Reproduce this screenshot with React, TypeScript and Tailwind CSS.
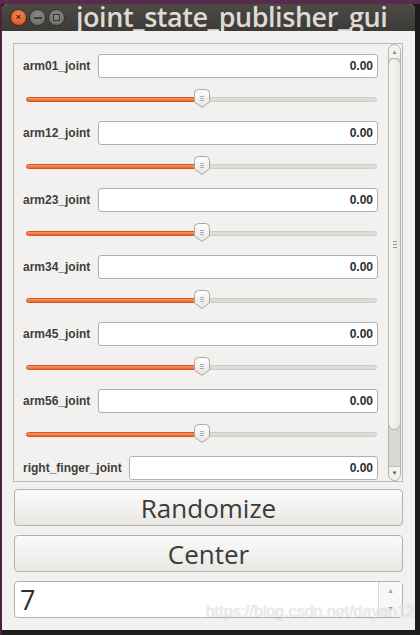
import React from "react";

const joints = [
  "arm01_joint",
  "arm12_joint",
  "arm23_joint",
  "arm34_joint",
  "arm45_joint",
  "arm56_joint",
  "right_finger_joint",
];

const SliderHandle = () => (
  <svg width="16" height="19" viewBox="0 0 16 19" className="block">
    <defs>
      <linearGradient id="hg" x1="0" y1="0" x2="0" y2="1">
        <stop offset="0" stopColor="#ffffff" />
        <stop offset="1" stopColor="#e6e4e0" />
      </linearGradient>
    </defs>
    <path
      d="M4.5 0.5 H11.5 A4 4 0 0 1 15.5 4.5 V13 L8 18.5 L0.5 13 V4.5 A4 4 0 0 1 4.5 0.5 Z"
      fill="url(#hg)"
      stroke="#a9a6a0"
    />
    <path d="M6 7.5 H10 M6 9.5 H10 M6 11.5 H10" stroke="#a09d97" strokeWidth="0.8" />
  </svg>
);

const JointRow = ({ name }: { name: string }) => {
  const wide = name.length > 12;
  return (
    <div className="flex flex-col">
      <div className="flex items-center h-[24px]">
        <span className={`${wide ? "w-[106px]" : "w-[75px]"} text-[12px] font-bold text-[#3f3f3f] whitespace-nowrap`}>
          {name}
        </span>
        <div className="flex-1 h-[24px] bg-white border border-[#b3b0ab] rounded-[3px] flex items-center justify-end pr-[4px] text-[12px] font-bold text-[#2e2e2e]">
          0.00
        </div>
      </div>
      <div className="h-[43px] pt-[12px] pl-[3px] pr-[1px]">
        <div className="relative h-[19px] flex items-start pt-[7px]">
          <div className="flex w-full h-[5px]">
            <div className="w-1/2 h-full rounded-l-full bg-[linear-gradient(#f79a6c,#ec6430)] border border-[#cf5523]" />
            <div className="w-1/2 h-full rounded-r-full bg-[#dedcd8] border border-[#d0cdc8]" />
          </div>
          <div className="absolute left-1/2 -translate-x-1/2 top-[-1px]">
            <SliderHandle />
          </div>
        </div>
      </div>
    </div>
  );
};

const App = () => {
  return (
    <div
      className="w-[420px] h-[635px] overflow-hidden bg-[#1e1e1e] flex flex-col"
      style={{ fontFamily: '"Liberation Sans", Arial, sans-serif' }}
    >
      <div className="h-[4px] bg-[#5a2a4c] shrink-0" />
      <div className="flex flex-1 min-h-0">
        <div className="w-[2px] bg-[#4a2240] shrink-0" />
        <div className="relative w-[413px] h-[626px] flex flex-col bg-[#f2f1f0] rounded-t-[6px] overflow-hidden">
          {/* title bar */}
          <div className="h-[27px] shrink-0 flex items-center bg-[linear-gradient(#4b4a45,#3c3b37)] overflow-hidden">
            <div className="flex items-center gap-[2px] pl-[8px]">
              <div className="w-[17px] h-[17px] rounded-full bg-[radial-gradient(circle_at_50%_35%,#f58a5c,#df4a16)] border border-[#3a2a22] flex items-center justify-center text-[#3a2014] text-[9px] font-bold leading-none">
                ×
              </div>
              <div className="w-[17px] h-[17px] rounded-full bg-[radial-gradient(circle_at_50%_35%,#8a8882,#6a6863)] border border-[#34332f] flex items-center justify-center">
                <div className="w-[8px] h-[2px] bg-[#3a3935]" />
              </div>
              <div className="w-[17px] h-[17px] rounded-full bg-[radial-gradient(circle_at_50%_35%,#8a8882,#6a6863)] border border-[#34332f] flex items-center justify-center">
                <div className="w-[7px] h-[7px] border border-[#3a3935]" />
              </div>
            </div>
            <span
              className="ml-[11px] text-[27px] font-semibold text-[#dfdbd2] whitespace-nowrap leading-none mt-[-2px] tracking-[-0.45px]"
              style={{ fontFamily: '"Open Sans", sans-serif' }}
            >
              joint_state_publisher_gui
            </span>
          </div>

          <div className="flex-1 flex flex-col pl-[11px] pr-[12px] pt-[12px]">
            {/* scroll area */}
            <div className="h-[439px] border border-[#bdbab5] flex overflow-hidden">
              <div className="flex-1 flex flex-col pl-[9px] pr-[10px] pt-[10px] overflow-hidden">
                {joints.map((j) => (
                  <JointRow key={j} name={j} />
                ))}
              </div>
              <div className="w-[13px] mr-[1px] flex flex-col rounded-full border border-[#b7b4af] bg-[#d9d7d3] overflow-hidden">
                <div className="h-[13px] flex items-start justify-center pt-[3px] text-[6px] text-[#8a8782] bg-[#f3f2f0] shrink-0">
                  ▲
                </div>
                <div className="h-[372px] rounded-full border border-[#b1aea8] bg-[linear-gradient(90deg,#f7f6f5,#e9e8e5)] flex items-center justify-center shrink-0 -mx-[1px]">
                  <div className="flex flex-col gap-[2px]">
                    <div className="w-[4px] h-[1px] bg-[#9b9892]" />
                    <div className="w-[4px] h-[1px] bg-[#9b9892]" />
                    <div className="w-[4px] h-[1px] bg-[#9b9892]" />
                  </div>
                </div>
                <div className="flex-1" />
                <div className="h-[14px] rounded-b-full border-t border-[#c3c0bb] bg-[#f3f2f0] flex items-center justify-center text-[6px] text-[#5a5853] shrink-0">
                  ▼
                </div>
              </div>
            </div>

            {/* buttons */}
            <div
              className="flex flex-col mt-[7px] pl-[1px]"
              style={{ fontFamily: '"Open Sans", sans-serif' }}
            >
              <button className="h-[37px] w-full rounded-[4px] border border-[#b4b1ac] bg-[linear-gradient(#fbfbfa,#e8e7e4)] text-[26px] text-[#3d3b38] leading-none">
                Randomize
              </button>
              <button className="h-[37px] w-full mt-[9px] rounded-[4px] border border-[#b4b1ac] bg-[linear-gradient(#fbfbfa,#e8e7e4)] text-[26px] text-[#3d3b38] leading-none">
                Center
              </button>
              <div className="h-[37px] w-full mt-[9px] rounded-[4px] border border-[#b4b1ac] bg-white flex">
                <div className="flex-1 flex items-center pl-[5px] text-[27px] text-[#2e2e2e] leading-none">
                  7
                </div>
                <div className="w-[24px] border-l border-[#dcdad6] bg-[#f8f8f7] flex flex-col items-center justify-between py-[5px] text-[7px] leading-none text-[#a3a09b]">
                  <span>▲</span>
                  <span>▼</span>
                </div>
              </div>
            </div>
          </div>

          <div className="absolute right-[0px] bottom-[6px] text-[16px] text-white/75 whitespace-nowrap pointer-events-none [text-shadow:0_0_1px_rgba(0,0,0,0.3)]">
            https://blog.csdn.net/dayan12
          </div>
        </div>
        <div className="flex-1 bg-[#1c1c1c]" />
      </div>
    </div>
  );
};

export default App;
